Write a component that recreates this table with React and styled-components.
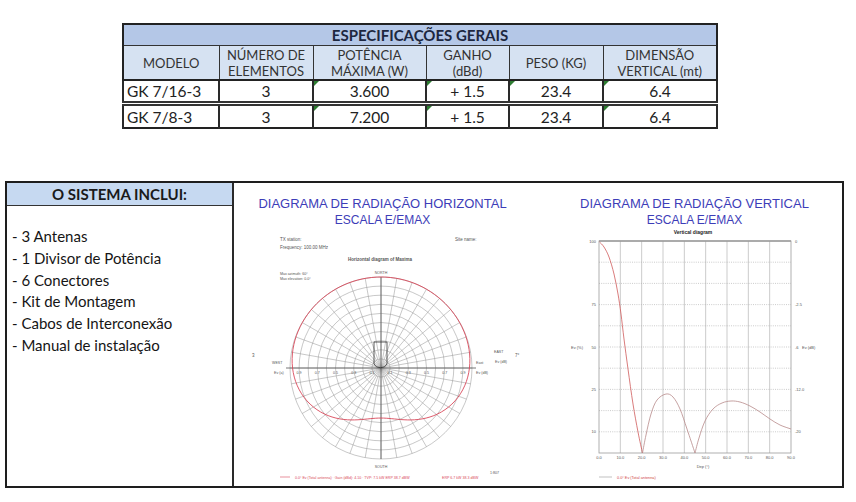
import React from "react";
import styled, { createGlobalStyle } from "styled-components";

const GlobalStyle = createGlobalStyle`
  body {
    margin: 0;
    background: #fff;
    font-family: Lato, "Open Sans", sans-serif;
  }
`;

const Page = styled.div`
  width: 856px;
  height: 502px;
  padding-top: 23px;
  box-sizing: border-box;
  overflow: hidden;
`;

const SpecTable = styled.table`
  margin-left: 122px;
  width: 594px;
  border-collapse: collapse;
  table-layout: fixed;
  border: 2px solid #222;
  color: #222;
`;

const TitleCell = styled.th`
  height: 20px;
  padding: 0;
  background: #b4c7e7;
  border-bottom: 1px solid #333;
  font-size: 15px;
  font-weight: 700;
  color: #1d2740;
  line-height: 20px;
`;

const HeadCell = styled.th`
  height: 33px;
  padding: 0;
  background: #d6e2f2;
  border: 1px solid #333;
  border-bottom: 2px solid #222;
  font-size: 13px;
  font-weight: 400;
  line-height: 16px;
  color: #333;
`;

const DataCell = styled.td`
  position: relative;
  height: ${({ $last }) => ($last ? "21px" : "20px")};
  padding: 0 3px;
  border-left: 2px solid #2a2a2a;
  border-right: 2px solid #2a2a2a;
  border-bottom: ${({ $last }) => ($last ? "none" : "5px double #333")};
  text-align: ${({ $left }) => ($left ? "left" : "center")};
  font-size: 15.5px;
  line-height: 20px;

  &::before {
    content: "";
    display: ${({ $flag }) => ($flag ? "block" : "none")};
    position: absolute;
    top: 0;
    left: 0;
    border-top: 5px solid #2e7d32;
    border-right: 5px solid transparent;
  }
`;

const SystemBox = styled.div`
  margin: 52px 0 0 5px;
  width: 839px;
  height: 307px;
  box-sizing: border-box;
  border: 2px solid #1e1e1e;
  display: grid;
  grid-template-columns: 227px 297px 1fr;
`;

const IncludeColumn = styled.div`
  border-right: 2px solid #2a2a2a;
`;

const IncludeHeader = styled.div`
  height: 22px;
  background: #c6d9f1;
  border-bottom: 1px solid #333;
  text-align: center;
  font-size: 15px;
  font-weight: 700;
  line-height: 22px;
  color: #1a1a1a;
`;

const IncludeList = styled.ul`
  margin: 0;
  padding: 20px 0 0 5px;
  list-style: none;
`;

const IncludeItem = styled.li`
  font-size: 15px;
  line-height: 21.8px;
  color: #151515;
`;

const DiagramPanel = styled.div`
  display: flex;
  flex-direction: column;
  align-items: center;
  padding-top: 12px;
  padding-left: ${({ $inset }) => $inset || 0}px;
`;

const DiagramTitle = styled.div`
  font-family: "Liberation Sans", Arial, sans-serif;
  font-size: ${({ $small }) => ($small ? 12 : 13)}px;
  line-height: 17px;
  color: #3d3db8;
  white-space: nowrap;
`;

const ChartLabel = styled.text`
  font-family: "Liberation Sans", Arial, sans-serif;
  font-size: ${({ $size }) => $size || 4.5}px;
  font-weight: ${({ $bold }) => ($bold ? 700 : 400)};
  fill: ${({ $color }) => $color || "#555"};
`;

const specs = [
  ["GK 7/16-3", "3", "3.600", "+ 1.5", "23.4", "6.4"],
  ["GK 7/8-3", "3", "7.200", "+ 1.5", "23.4", "6.4"],
];
const flags = [
  [false, false, true, true, true, true],
  [false, false, true, true, false, true],
];
const colWidths = [96, 94, 113, 83, 94, 114];

const includes = [
  "- 3 Antenas",
  "- 1 Divisor de Potência",
  "- 6 Conectores",
  "- Kit de Montagem",
  "- Cabos de Interconexão",
  "- Manual de instalação",
];

// catmull-rom through the points
const smooth = (pts) => {
  const f = (n) => n.toFixed(2);
  let d = `M${f(pts[0][0])},${f(pts[0][1])}`;
  for (let i = 0; i < pts.length - 1; i++) {
    const p0 = pts[i - 1] || pts[i];
    const p1 = pts[i];
    const p2 = pts[i + 1];
    const p3 = pts[i + 2] || p2;
    const c1 = [p1[0] + (p2[0] - p0[0]) / 6, p1[1] + (p2[1] - p0[1]) / 6];
    const c2 = [p2[0] - (p3[0] - p1[0]) / 6, p2[1] - (p3[1] - p1[1]) / 6];
    d += ` C${f(c1[0])},${f(c1[1])} ${f(c2[0])},${f(c2[1])} ${f(p2[0])},${f(p2[1])}`;
  }
  return d;
};

function HorizontalChart() {
  const cx = 381;
  const cy = 369;
  const R = 91;
  const rings = Array.from({ length: 10 }, (_, i) => (R * (i + 1)) / 10);
  const spokes = Array.from({ length: 36 }, (_, i) => (i * Math.PI) / 18);
  const pattern = [];
  for (let a = 0; a <= 360; a += 3) {
    const t = (a * Math.PI) / 180;
    const r = R * (1 - 0.45 * Math.pow((1 - Math.cos(t)) / 2, 4));
    pattern.push([cx + r * Math.sin(t), cy - r * Math.cos(t)]);
  }
  const ticks = [0.9, 0.7, 0.5, 0.3, 0.1];

  return (
    <svg width="297" height="256" viewBox="234 230 297 256">
      <ChartLabel x="280" y="242">TX station:</ChartLabel>
      <ChartLabel x="280" y="250">Frequency: 100.00 MHz</ChartLabel>
      <ChartLabel x="455" y="242">Site name:</ChartLabel>
      <ChartLabel x="380" y="262" $bold textAnchor="middle">
        Horizontal diagram of Maxima
      </ChartLabel>
      <ChartLabel x="280" y="276" $size={3.6}>Max azimuth: 60°</ChartLabel>
      <ChartLabel x="280" y="281" $size={3.6}>Max elevation: 0.0°</ChartLabel>
      <ChartLabel x={cx} y="275" $size={3.6} textAnchor="middle">NORTH</ChartLabel>

      {rings.map((r) => (
        <circle key={r} cx={cx} cy={cy} r={r} fill="none" stroke="#9a9a9a" strokeWidth="0.55" />
      ))}
      {spokes.map((t) => (
        <line
          key={t}
          x1={cx}
          y1={cy}
          x2={cx + R * Math.sin(t)}
          y2={cy - R * Math.cos(t)}
          stroke="#9a9a9a"
          strokeWidth="0.55"
        />
      ))}
      <line x1={cx - R - 4} y1={cy} x2={cx + R + 4} y2={cy} stroke="#555" strokeWidth="0.8" />
      <line x1={cx} y1={cy - R} x2={cx} y2={cy + R} stroke="#555" strokeWidth="0.8" />
      <path d={smooth(pattern)} fill="none" stroke="#d9485a" strokeWidth="0.9" />

      <path d="M374 365 L374 343 L387 343 L387 365" fill="none" stroke="#333" strokeWidth="0.8" />
      <path d="M374 365 A7 6 0 0 0 387 365" fill="none" stroke="#333" strokeWidth="0.8" />

      {ticks.map((v) => (
        <React.Fragment key={v}>
          <ChartLabel x={cx - v * R} y="375" $size={3.6} textAnchor="middle">{v}</ChartLabel>
          <ChartLabel x={cx + v * R} y="375" $size={3.6} textAnchor="middle">{v}</ChartLabel>
        </React.Fragment>
      ))}
      <ChartLabel x="252" y="358">3</ChartLabel>
      <ChartLabel x="272" y="365" $size={3.6}>WEST</ChartLabel>
      <ChartLabel x="274" y="375" $size={3.6}>Ev (a)</ChartLabel>
      <ChartLabel x="476" y="365" $size={3.6}>East</ChartLabel>
      <ChartLabel x="476" y="375" $size={3.6}>Ev (dB)</ChartLabel>
      <ChartLabel x="494" y="354" $size={3.6}>EAST</ChartLabel>
      <ChartLabel x="495" y="364" $size={3.6}>Ev (dB)</ChartLabel>
      <ChartLabel x="515" y="358">7°</ChartLabel>
      <ChartLabel x={cx} y="469" $size={3.6} textAnchor="middle">SOUTH</ChartLabel>

      <line x1="280" y1="478" x2="290" y2="478" stroke="#d9485a" strokeWidth="0.6" />
      <ChartLabel x="295" y="479.5" $size={3.6} $color="#d9485a">
        0.0° Ev (Total antenna) · Gain (dBd): 4.10 · TVP: 7.5 kW ERP 38.7 dBW
      </ChartLabel>
      <ChartLabel x="442" y="479.5" $size={3.6} $color="#d9485a">ERP 6.7 kW 38.3 dBW</ChartLabel>
      <ChartLabel x="490" y="475" $size={3.6}>1:807</ChartLabel>
    </svg>
  );
}

function VerticalChart() {
  const x0 = 599;
  const x1 = 791;
  const y0 = 242;
  const y1 = 454;
  const dx = (x1 - x0) / 9;
  const dy = (y1 - y0) / 10;
  const rows = [
    ["100", "0", 0],
    ["75", "-2.5", 3],
    ["50", "-6", 5],
    ["25", "-12.0", 7],
    ["10", "-20", 9],
  ];
  const mainLobe = [
    [599.5, 243], [604, 248], [609, 258], [614, 275], [618, 295], [621, 315],
    [624, 340], [628, 370], [633, 405], [638, 433], [642.5, 454],
  ];
  const sideLobe = [
    [642.5, 454], [646, 436], [651, 415], [657, 401], [666, 395], [673, 398],
    [680, 410], [687, 430], [695, 454],
  ];
  const tail = [
    [695, 454], [699, 439], [705, 422], [713, 410], [722, 404], [731, 402],
    [740, 403], [750, 407], [760, 413], [770, 420], [780, 426], [791, 430],
  ];

  return (
    <svg width="295" height="256" viewBox="547 230 295 256">
      <ChartLabel x="693" y="235" $size={5} $bold $color="#222" textAnchor="middle">
        Vertical diagram
      </ChartLabel>
      {Array.from({ length: 8 }, (_, i) => (
        <line
          key={`v${i}`}
          x1={x0 + dx * (i + 1)}
          y1={y0}
          x2={x0 + dx * (i + 1)}
          y2={y1}
          stroke="#a8a8a8"
          strokeWidth="0.6"
        />
      ))}
      {Array.from({ length: 9 }, (_, i) => (
        <line
          key={`h${i}`}
          x1={x0}
          y1={y0 + dy * (i + 1)}
          x2={x1}
          y2={y0 + dy * (i + 1)}
          stroke="#a8a8a8"
          strokeWidth="0.6"
          strokeDasharray="1 1.2"
        />
      ))}
      <rect x={x0} y={y0} width={x1 - x0} height={y1 - y0} fill="none" stroke="#9c9c9c" strokeWidth="0.8" />
      <line x1={x0} y1={y0} x2={x1} y2={y0} stroke="#9c9c9c" strokeWidth="1.4" />

      {rows.map(([pct, db, j]) => (
        <React.Fragment key={pct}>
          <ChartLabel x="596" y={y0 + dy * j + 1.5} $size={4} textAnchor="end">{pct}</ChartLabel>
          <ChartLabel x="795" y={y0 + dy * j + 1.5} $size={4}>{db}</ChartLabel>
        </React.Fragment>
      ))}
      <ChartLabel x="577" y="349.5" $size={4} textAnchor="middle">Ev (%)</ChartLabel>
      <ChartLabel x="802" y="349.5" $size={4}>Ev (dB)</ChartLabel>
      {Array.from({ length: 10 }, (_, i) => (
        <ChartLabel key={i} x={x0 + dx * i} y="460" $size={4} textAnchor="middle">
          {(i * 10).toFixed(1)}
        </ChartLabel>
      ))}
      <ChartLabel x="703" y="469" $size={4} textAnchor="middle">Dep (°)</ChartLabel>

      <path d={smooth(mainLobe)} fill="none" stroke="#cf5a5a" strokeWidth="0.8" />
      <path d={smooth(sideLobe)} fill="none" stroke="#b88a8a" strokeWidth="0.8" />
      <path d={smooth(tail)} fill="none" stroke="#b88a8a" strokeWidth="0.8" />

      <line x1="599" y1="478" x2="612" y2="478" stroke="#999" strokeWidth="0.6" />
      <ChartLabel x="617" y="479.5" $size={3.8} $color="#d04848">0.0° Ev (Total antenna)</ChartLabel>
    </svg>
  );
}

export default function App() {
  return (
    <Page>
      <GlobalStyle />
      <SpecTable>
        <colgroup>
          {colWidths.map((w, i) => (
            <col key={i} style={{ width: w }} />
          ))}
        </colgroup>
        <thead>
          <tr>
            <TitleCell colSpan={6}>ESPECIFICAÇÕES GERAIS</TitleCell>
          </tr>
          <tr>
            <HeadCell>MODELO</HeadCell>
            <HeadCell>NÚMERO DE<br />ELEMENTOS</HeadCell>
            <HeadCell>POTÊNCIA<br />MÁXIMA (W)</HeadCell>
            <HeadCell>GANHO<br />(dBd)</HeadCell>
            <HeadCell>PESO (KG)</HeadCell>
            <HeadCell>DIMENSÃO<br />VERTICAL (mt)</HeadCell>
          </tr>
        </thead>
        <tbody>
          {specs.map((row, r) => (
            <tr key={row[0]}>
              {row.map((value, c) => (
                <DataCell
                  key={c}
                  $left={c === 0}
                  $flag={flags[r][c]}
                  $last={r === specs.length - 1}
                >
                  {value}
                </DataCell>
              ))}
            </tr>
          ))}
        </tbody>
      </SpecTable>

      <SystemBox>
        <IncludeColumn>
          <IncludeHeader>O SISTEMA INCLUI:</IncludeHeader>
          <IncludeList>
            {includes.map((item) => (
              <IncludeItem key={item}>{item}</IncludeItem>
            ))}
          </IncludeList>
        </IncludeColumn>

        <DiagramPanel>
          <DiagramTitle>DIAGRAMA DE RADIAÇÃO HORIZONTAL</DiagramTitle>
          <DiagramTitle $small>ESCALA E/EMAX</DiagramTitle>
          <HorizontalChart />
        </DiagramPanel>

        <DiagramPanel $inset={16}>
          <DiagramTitle>DIAGRAMA DE RADIAÇÃO VERTICAL</DiagramTitle>
          <DiagramTitle $small>ESCALA E/EMAX</DiagramTitle>
          <VerticalChart />
        </DiagramPanel>
      </SystemBox>
    </Page>
  );
}
